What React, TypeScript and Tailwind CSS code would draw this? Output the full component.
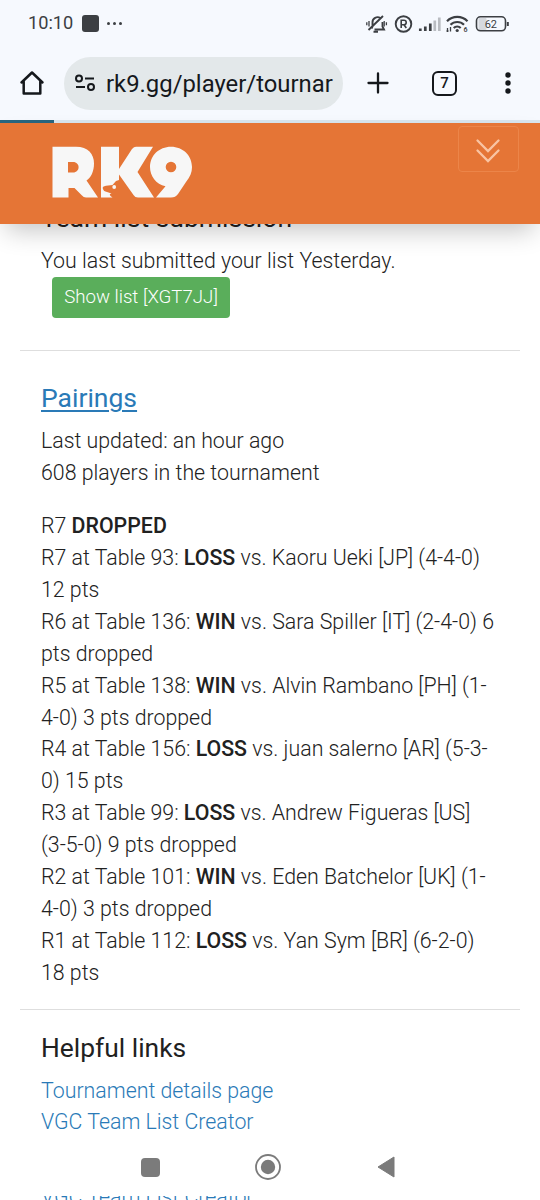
import { ReactNode } from "react";

const rounds: { table: string; result: string; a: string; b: string }[] = [
  { table: "R7 at Table 93:", result: "LOSS", a: "vs. Kaoru Ueki [JP] (4-4-0)", b: "12 pts" },
  { table: "R6 at Table 136:", result: "WIN", a: "vs. Sara Spiller [IT] (2-4-0) 6", b: "pts dropped" },
  { table: "R5 at Table 138:", result: "WIN", a: "vs. Alvin Rambano [PH] (1-", b: "4-0) 3 pts dropped" },
  { table: "R4 at Table 156:", result: "LOSS", a: "vs. juan salerno [AR] (5-3-", b: "0) 15 pts" },
  { table: "R3 at Table 99:", result: "LOSS", a: "vs. Andrew Figueras [US]", b: "(3-5-0) 9 pts dropped" },
  { table: "R2 at Table 101:", result: "WIN", a: "vs. Eden Batchelor [UK] (1-", b: "4-0) 3 pts dropped" },
  { table: "R1 at Table 112:", result: "LOSS", a: "vs. Yan Sym [BR] (6-2-0)", b: "18 pts" },
];

function Bold({ children }: { children: ReactNode }) {
  return <b className="font-medium">{children}</b>;
}

function StatusBar() {
  return (
    <div className="flex h-[46px] shrink-0 items-center bg-[#f6f9fe] pt-px pl-[28px] text-[#3c3f43]">
      <span className="w-[45px] text-[18.200px] leading-none whitespace-nowrap">10:10</span>
      <span className="ml-[9px] size-[17px] rounded-[3px] bg-[#3c3f43]" />
      <span className="ml-[8px] flex gap-[3px]">
        <i className="size-[3px] rounded-full bg-current" />
        <i className="size-[3px] rounded-full bg-current" />
        <i className="size-[3px] rounded-full bg-current" />
      </span>
      <svg className="ml-auto" width="174" height="30" viewBox="0 0 174 30" fill="none" stroke="currentColor">
        <g strokeWidth="1.9">
          <path d="M5.500 19.500L6.500 17.500v-4a5 5 0 0 1 8-4.300M16.500 13v4.500l1.500 3H8.500M2.500 21L17 7M7.500 22.700h4.500" />
          <path d="M3 12v5.500M.8 13.300v3M18.200 12v5.500M20.400 13.300v3" strokeWidth="1.300" />
          <circle cx="37.500" cy="15" r="7.800" />
          <path d="M35.200 19v-7.700h2.800a2.200 2.200 0 0 1 0 4.400h-2.800M38 15.700l2.300 3.300" strokeWidth="1.600" />
        </g>
        <g strokeWidth="2.700">
          <path d="M54.300 22v-2.500M59.300 22v-4.500M64.300 22v-7.500" />
          <path d="M68.800 22V11.500M73.300 22V8.500" stroke="#b9bcc1" />
        </g>
        <g strokeWidth="2.200">
          <path d="M81 12.200a14.500 14.500 0 0 1 20.500 0M84.500 15.800a9.500 9.500 0 0 1 13.500 0M87.700 19a5 5 0 0 1 7 0" />
          <circle cx="91.200" cy="21.500" r="1.600" fill="currentColor" stroke="none" />
          <path d="M81.500 19v4m-1-1h2M84.500 18v4.500" strokeWidth="1.300" />
        </g>
        <text x="97.500" y="23" fontSize="7" fontWeight="600" fill="currentColor" stroke="none">6</text>
        <rect x="112.500" y="9" width="8" height="12" rx="1" fill="#d6d9de" stroke="none" />
        <rect x="110.500" y="7.800" width="29" height="14" rx="4" strokeWidth="1.600" />
        <path d="M141.800 13v4" strokeWidth="2" />
        <text x="118.700" y="19" fontSize="11" fill="currentColor" stroke="none">62</text>
      </svg>
    </div>
  );
}

function BrowserBar() {
  return (
    <div className="flex h-[74px] shrink-0 items-center bg-[#f6f9fe] text-[#15181c]">
      <svg className="ml-[19px]" width="26" height="26" viewBox="0 0 26 26" fill="none" stroke="currentColor" strokeWidth="2.500" strokeLinejoin="round" strokeLinecap="round">
        <path d="M2.500 12.500L13 2.500L23.500 12.500M4.700 11v12.500h16.600V11" />
      </svg>
      <div className="ml-[19px] flex h-[53px] w-[279px] items-center overflow-hidden rounded-full bg-[#e3e8ea] pl-[11px]">
        <svg width="20" height="18" viewBox="0 0 20 18" fill="none" stroke="currentColor" strokeWidth="2">
          <circle cx="4" cy="4.500" r="3" />
          <path d="M10 4.500h9M1 13h9" />
          <circle cx="16" cy="13" r="3" />
        </svg>
        <span className="ml-[11px] w-[230px] pt-px text-[23.850px] leading-[32px] whitespace-nowrap">rk9.gg/player/tournar</span>
      </div>
      <svg className="ml-[24px]" width="22" height="22" viewBox="0 0 22 22" stroke="currentColor" strokeWidth="2.300" strokeLinecap="round">
        <path d="M11 1.500v19M1.500 11h19" />
      </svg>
      <div className="ml-[43px] flex size-[25px] items-center justify-center rounded-[6px] border-2 border-current text-[15px] leading-none font-medium">7</div>
      <svg className="ml-[47px]" width="8" height="24" viewBox="0 0 8 24" fill="currentColor">
        <circle cx="4" cy="4" r="2.700" />
        <circle cx="4" cy="12" r="2.700" />
        <circle cx="4" cy="20" r="2.700" />
      </svg>
    </div>
  );
}

function Header() {
  return (
    <header className="relative z-10 flex h-[101px] shrink-0 items-start justify-between bg-[#e57536] shadow-[0_12px_24px_-6px_rgba(0,0,0,0.240)]">
      <svg className="mt-[23px] ml-[52px]" width="142" height="52" viewBox="0 0 142 52" fill="#f7f7f7">
        <path fillRule="evenodd" d="M.5.700H24C36 .700 42 8 42 17.500C42 25.500 39 31.500 34.500 34.500L46 51.500H34Q31.500 51.500 30 49.500L22.500 42H16.500V51.500H.5ZM16 16V26.500H21C28.500 26.500 28.500 16 21 16Z" />
        <path d="M49 .700H67V23L80 3Q82 .700 84 .700H101L85.500 26L102 51.500H86Q83 51.500 81.500 49L67 28.500V34L64 35L60.500 39L54 39.700Q50 40.500 50.800 42.500Q51.500 45.500 55 46L59.500 47.500Q55.500 48 60.500 51.500H49Z" />
        <circle cx="62.200" cy="41" r="1.900" />
        <path fillRule="evenodd" d="M119 .700C131 .700 140 9.500 140 21C140 26.500 138 31 134 36L126 48Q123.500 51.500 119 51.500H104L113.500 40.300C104 38.500 98 30 98 21C98 9.500 107 .700 119 .700ZM119 15.700A5.300 5.300 0 1 0 119 26.300A5.300 5.300 0 0 0 119 15.700Z" />
      </svg>
      <div className="mt-[3px] mr-[21px] flex h-[46px] w-[61px] items-center justify-center rounded-[4px] border border-[#ec8549]">
        <svg className="mt-[3px] mr-[1px]" width="26" height="26" viewBox="0 0 26 26" fill="none" stroke="#f9c4a3" strokeWidth="2.300" strokeLinecap="round">
          <path d="M2.500 2.500L13 13L23.500 2.500M2.500 12.500L13 23L23.500 12.500" />
        </svg>
      </div>
    </header>
  );
}

function Navigation() {
  return (
    <nav className="flex h-[60px] shrink-0 items-center bg-white pt-[2px] text-[#7b7b7b]">
      <span className="ml-[141px] size-[19px] rounded-[4px] bg-current" />
      <svg className="ml-[95px]" width="26" height="26" viewBox="0 0 26 26">
        <circle cx="13" cy="13" r="12" fill="none" stroke="currentColor" strokeWidth="1.800" />
        <circle cx="13" cy="13" r="7.200" fill="currentColor" />
      </svg>
      <svg className="ml-[96px]" width="18" height="22" viewBox="0 0 18 22" fill="currentColor" stroke="currentColor" strokeLinejoin="round">
        <path d="M1 11L17 1V21Z" />
      </svg>
    </nav>
  );
}

export default function App() {
  return (
    <div className="flex h-[1200px] w-[540px] flex-col overflow-hidden bg-white font-[Roboto,sans-serif] text-[#212121]">
      <StatusBar />
      <BrowserBar />
      <div className="h-[3px] shrink-0 bg-[#d9e6ef]">
        <div className="h-full w-[54px] bg-[#28667f]" />
      </div>
      <Header />
      <main className="flex h-[912px] shrink-0 flex-col overflow-hidden px-[20px]">
        <section className="h-[127px] shrink-0 border-b border-[#dedede] px-[21px] text-[21.330px] leading-[31.870px] font-light">
          <h2 className="-mt-[24px] h-[45px] text-[26.500px] leading-[36px] font-normal whitespace-nowrap">Team list submission</h2>
          <p className="whitespace-nowrap">You last submitted your list Yesterday.</p>
          <button className="ml-[11px] flex h-[41px] w-[178px] items-center justify-center rounded-[4px] bg-[#5aae5b] pt-px text-[18.660px] font-light whitespace-nowrap text-white">Show list [XGT7JJ]</button>
        </section>
        <section className="h-[659px] shrink-0 border-b border-[#dedede] px-[21px] pt-[28px] text-[21.330px] leading-[31.870px] font-light whitespace-nowrap">
          <h2 className="mb-[9px] text-[26.500px] leading-[37px] font-normal text-[#2a7ab7] underline decoration-2 underline-offset-[3px]">Pairings</h2>
          <p>Last updated: an hour ago</p>
          <p>608 players in the tournament</p>
          <p className="mt-[21.500px]">R7 <Bold>DROPPED</Bold></p>
          {rounds.map((r) => (
            <p key={r.table}>
              {r.table} <Bold>{r.result}</Bold> {r.a}
              <br />
              {r.b}
            </p>
          ))}
        </section>
        <section className="px-[21px] pt-[20px] text-[21.330px] leading-[31.870px] font-light whitespace-nowrap">
          <h2 className="mb-[7.500px] text-[26.400px] leading-[37px] font-normal">Helpful links</h2>
          <a className="block text-[#2a7ab7]">Tournament details page</a>
          <a className="block text-[#2a7ab7]">VGC Team List Creator</a>
        </section>
      </main>
      <Navigation />
      <div className="h-[4px] shrink-0 overflow-hidden px-[41px]">
        <div className="-mt-[15px] text-[21.330px] leading-[31.870px] font-light text-[#2a7ab7]">VGC Team List Creator</div>
      </div>
    </div>
  );
}
